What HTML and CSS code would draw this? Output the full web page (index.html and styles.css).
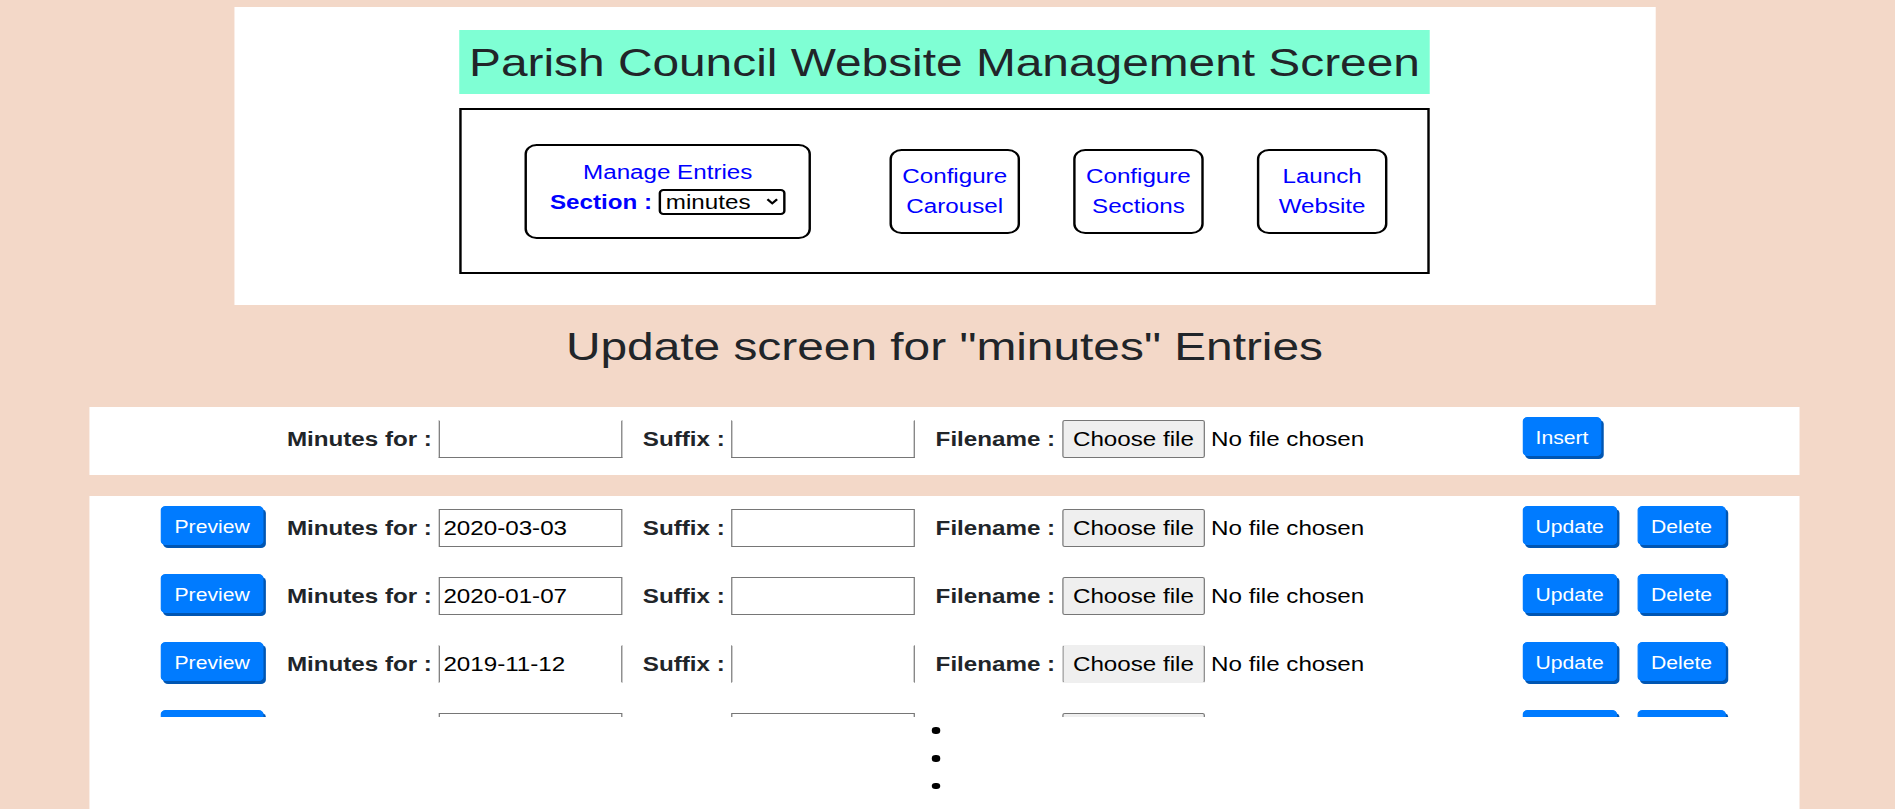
FILE: index.html
```html
<!DOCTYPE html>
<html lang="en">
<head>
<meta charset="utf-8">
<title>Parish Council Website Management Screen</title>
<link rel="stylesheet" href="styles.css">
</head>
<body>
<div class="page">
  <header class="masthead">
    <div class="masthead-inner">
      <h1 class="site-title">Parish Council Website Management Screen</h1>
      <nav class="menu">
        <div class="menu-card menu-card--entries">
          <a class="menu-link" href="#">Manage Entries</a>
          <div class="section-picker">
            <label class="section-label" for="section">Section :</label>
            <span class="select-wrap">
              <select id="section" class="section-select"><option>minutes</option></select>
              <svg class="select-chevron" viewBox="0 0 10 7" width="10" height="7"><path d="M1 1.2 L5 5.4 L9 1.2" fill="none" stroke="#000" stroke-width="2"/></svg>
            </span>
          </div>
        </div>
        <a class="menu-card menu-card--small" href="#">Configure<br>Carousel</a>
        <a class="menu-card menu-card--small" href="#">Configure<br>Sections</a>
        <a class="menu-card menu-card--small" href="#">Launch<br>Website</a>
      </nav>
    </div>
  </header>

  <h2 class="page-heading">Update screen for "minutes" Entries</h2>

  <section class="panel panel--insert">
    <form class="entry-row">
      <span class="cell-preview"></span>
      <label class="field"><span class="field-label">Minutes for :</span><input class="text-input text-input--open-top" type="text"></label>
      <label class="field"><span class="field-label">Suffix :</span><input class="text-input text-input--open-top" type="text"></label>
      <div class="field"><span class="field-label">Filename :</span>
        <span class="file-picker"><span class="file-button">Choose file</span><span class="file-status">No file chosen</span></span>
      </div>
      <div class="actions"><button class="btn" type="button"><span class="btn-text">Insert</span></button></div>
    </form>
  </section>

  <section class="panel panel--list">
    <div class="entry-list">
      <form class="entry-row">
        <span class="cell-preview"><button class="btn" type="button"><span class="btn-text">Preview</span></button></span>
        <label class="field"><span class="field-label">Minutes for :</span><input class="text-input" type="text" value="2020-03-03"></label>
        <label class="field"><span class="field-label">Suffix :</span><input class="text-input" type="text"></label>
        <div class="field"><span class="field-label">Filename :</span>
          <span class="file-picker"><span class="file-button">Choose file</span><span class="file-status">No file chosen</span></span>
        </div>
        <div class="actions"><button class="btn" type="button"><span class="btn-text">Update</span></button><button class="btn" type="button"><span class="btn-text">Delete</span></button></div>
      </form>
      <form class="entry-row">
        <span class="cell-preview"><button class="btn" type="button"><span class="btn-text">Preview</span></button></span>
        <label class="field"><span class="field-label">Minutes for :</span><input class="text-input" type="text" value="2020-01-07"></label>
        <label class="field"><span class="field-label">Suffix :</span><input class="text-input" type="text"></label>
        <div class="field"><span class="field-label">Filename :</span>
          <span class="file-picker"><span class="file-button">Choose file</span><span class="file-status">No file chosen</span></span>
        </div>
        <div class="actions"><button class="btn" type="button"><span class="btn-text">Update</span></button><button class="btn" type="button"><span class="btn-text">Delete</span></button></div>
      </form>
      <form class="entry-row">
        <span class="cell-preview"><button class="btn" type="button"><span class="btn-text">Preview</span></button></span>
        <label class="field"><span class="field-label">Minutes for :</span><input class="text-input text-input--open-y" type="text" value="2019-11-12"></label>
        <label class="field"><span class="field-label">Suffix :</span><input class="text-input text-input--open-y" type="text"></label>
        <div class="field"><span class="field-label">Filename :</span>
          <span class="file-picker"><span class="file-button file-button--open-y">Choose file</span><span class="file-status">No file chosen</span></span>
        </div>
        <div class="actions"><button class="btn" type="button"><span class="btn-text">Update</span></button><button class="btn" type="button"><span class="btn-text">Delete</span></button></div>
      </form>
      <form class="entry-row entry-row--peek" aria-hidden="true">
        <span class="cell-preview"><button class="btn" type="button" tabindex="-1"><span class="btn-text">Preview</span></button></span>
        <label class="field"><span class="field-label">Minutes for :</span><input class="text-input" type="text" tabindex="-1"></label>
        <label class="field"><span class="field-label">Suffix :</span><input class="text-input" type="text" tabindex="-1"></label>
        <div class="field"><span class="field-label">Filename :</span>
          <span class="file-picker"><span class="file-button"><span class="btn-text">Choose file</span></span><span class="file-status">No file chosen</span></span>
        </div>
        <div class="actions"><button class="btn" type="button" tabindex="-1"><span class="btn-text">Update</span></button><button class="btn" type="button" tabindex="-1"><span class="btn-text">Delete</span></button></div>
      </form>
    </div>
    <div class="more-dots" aria-hidden="true"><span class="dot"></span><span class="dot"></span><span class="dot"></span></div>
  </section>
</div>
</body>
</html>
```

FILE: styles.css
```css
html, body {
  margin: 0;
  height: 100%;
  overflow: hidden;
  background: #f3d8c8;
}

body {
  font-family: "Liberation Sans", Arial, sans-serif;
  font-size: 20px;
  line-height: 1.5;
  color: #212529;
}

/* the reference was captured ~1568px wide and stretched to 1895px */
.page {
  width: 1568px;
  box-sizing: border-box;
  padding: 7px 5px 0 0;
  transform: scaleX(1.208546);
  transform-origin: 0 0;
}

/* ---------- header ---------- */
.masthead {
  width: 1176px;
  margin: 0 auto;
  background: #fff;
  padding: 23px 0 31px;
}

.masthead-inner {
  width: 803px;
  margin: 0 auto;
}

.site-title {
  margin: 0 0 14px;
  padding: 8px 0;
  background: #7fffd4;
  font-size: 39.6px;
  line-height: 48px;
  font-weight: 400;
  text-align: center;
  white-space: nowrap;
  color: #212529;
}

.menu {
  display: flex;
  align-items: center;
  border: 2px solid #000;
  padding: 33.5px 0 33.5px 52px;
}

.menu-card {
  display: block;
  box-sizing: border-box;
  border: 2px solid #000;
  border-radius: 10px;
  color: #00f;
  text-decoration: none;
  text-align: center;
}

.menu-card--entries {
  display: flex;
  flex-direction: column;
  align-items: center;
  padding: 11px 19px 20px;
  margin-right: 65px;
}

.menu-card--small {
  width: 108px;
  padding: 10.5px 0;
  margin-right: 44px;
}

.menu-card--small:last-child {
  margin-right: 0;
}

.menu-link {
  color: #00f;
  text-decoration: none;
}

.section-picker {
  display: flex;
  align-items: center;
  gap: 5.5px;
  height: 30px;
}

.section-label {
  font-weight: 700;
  color: #00f;
}

.select-wrap {
  position: relative;
  display: block;
}

.section-select {
  -webkit-appearance: none;
  appearance: none;
  display: block;
  box-sizing: border-box;
  width: 105px;
  height: 26px;
  margin: 0;
  padding: 0 0 0 4px;
  border: 2px solid #000;
  border-radius: 4px;
  background: #fff;
  color: #000;
  font: 20px "Liberation Sans", Arial, sans-serif;
}

.select-chevron {
  position: absolute;
  right: 6px;
  top: 9.5px;
  pointer-events: none;
}

/* ---------- heading ---------- */
.page-heading {
  margin: 17px 0 37px;
  font-size: 39.6px;
  line-height: 48px;
  font-weight: 400;
  text-align: center;
  white-space: nowrap;
  color: #212529;
}

/* ---------- panels ---------- */
.panel {
  width: 1415px;
  margin: 0 auto;
  background: #fff;
}

.panel--insert {
  margin-bottom: 21px;
}

.entry-list {
  height: 221px;
  overflow: hidden;
}

.entry-row {
  display: flex;
  justify-content: center;
  align-items: center;
  gap: 17px;
  height: 68px;
  box-sizing: border-box;
  padding-bottom: 4px;
  margin: 0;
}

/* a row that only peeks in at the bottom of the scroll area */
.entry-row--peek .field-label,
.entry-row--peek .file-status,
.entry-row--peek .btn-text {
  visibility: hidden;
}

.cell-preview {
  display: flex;
  width: 87px;
}

.field {
  display: flex;
  align-items: center;
  gap: 5.5px;
}

.field-label {
  font-weight: 700;
  white-space: nowrap;
}

.text-input {
  box-sizing: border-box;
  width: 152px;
  height: 38px;
  margin: 0;
  padding: 0 3px;
  border: 1px solid #767676;
  border-radius: 0;
  background: #fff;
  color: #000;
  font: 20px "Liberation Sans", Arial, sans-serif;
}

.text-input--open-top {
  border-top-color: transparent;
}

.text-input--open-y {
  border-top-color: transparent;
  border-bottom-color: transparent;
}

.file-picker {
  display: flex;
  align-items: center;
  gap: 5px;
  width: 364px;
}

.file-button {
  display: flex;
  align-items: center;
  justify-content: center;
  box-sizing: border-box;
  width: 118.5px;
  height: 38px;
  border: 1px solid #767676;
  border-radius: 2px;
  background: #efefef;
  color: #000;
  white-space: nowrap;
}

.file-button--open-y {
  border-top-color: transparent;
  border-bottom-color: transparent;
}

.file-status {
  color: #000;
  white-space: nowrap;
}

.actions {
  display: flex;
  gap: 17px;
  width: 170px;
}

.btn {
  margin: 0 0 5px;
  padding: 7px 10px 3px;
  border: 1px solid #007bff;
  border-radius: 4px;
  background: #007bff;
  color: #fff;
  font: 17.5px/26.25px "Liberation Sans", Arial, sans-serif;
  box-shadow: 2px 3px 0 #0056b3;
  cursor: pointer;
  white-space: nowrap;
}

.btn-text {
  display: block;
}

/* ---------- continuation marker ---------- */
.more-dots {
  display: flex;
  flex-direction: column;
  align-items: center;
  gap: 21.3px;
  padding: 10.4px 14px 60px 0;
}

.dot {
  width: 6.5px;
  height: 6.5px;
  border-radius: 50%;
  background: #000;
}
```
